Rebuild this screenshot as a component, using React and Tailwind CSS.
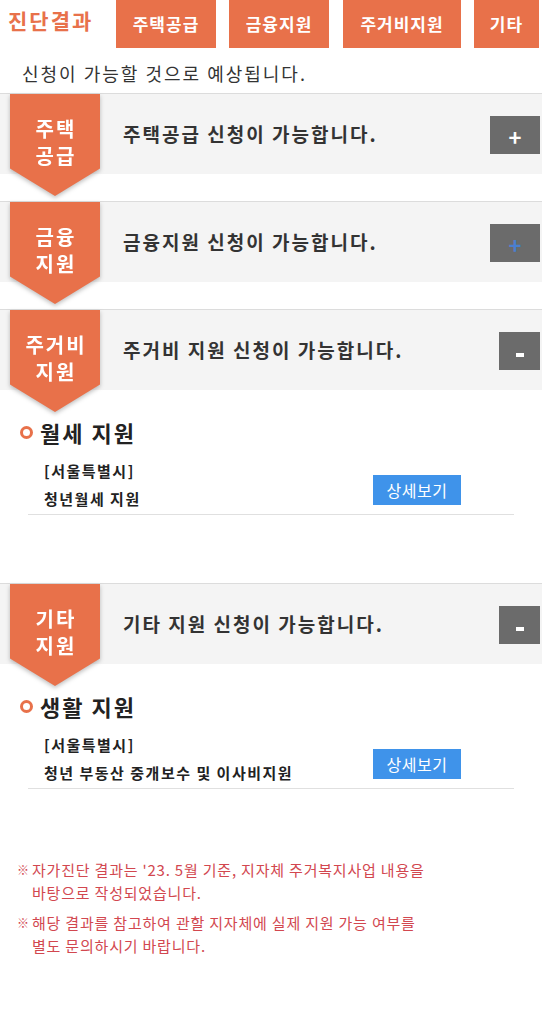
import React from 'react';

const font = { fontFamily: '"Noto Sans CJK KR", "Noto Sans", sans-serif' };

const tabs = [
  { label: '주택공급', w: 'w-[100px]', ml: 'ml-[24px]' },
  { label: '금융지원', w: 'w-[100px]', ml: 'ml-[13px]' },
  { label: '주거비지원', w: 'w-[118px]', ml: 'ml-[14px]' },
  { label: '기타', w: 'w-[65px]', ml: 'ml-[13px]' },
];

function PlusButton({ blue }) {
  return (
    <div className="w-[50px] h-[38px] bg-[#6b6b6b] flex items-end justify-center pb-[7px]">
      <span className={`text-[22px] font-bold leading-none ${blue ? 'text-[#4a7fd0]' : 'text-white'}`}>+</span>
    </div>
  );
}

function MinusButton() {
  return (
    <div className="w-[41px] h-[38px] bg-[#6b6b6b] flex items-end justify-center pb-[13px]">
      <span className="block w-[8px] h-[4px] bg-white" />
    </div>
  );
}

function SectionHeader({ badge, title, open, blue }) {
  return (
    <div className="relative border-t border-[#dcdcdc]">
      <div className="h-[80px] bg-[#f4f4f4] flex items-center justify-between pl-[123px] pr-[2px]">
        <span className="text-[19px] font-bold text-[#333] tracking-[2px]">{title}</span>
        <div className="mt-[2px]">{open ? <MinusButton /> : <PlusButton blue={blue} />}</div>
      </div>
      <div className="absolute left-[10px] top-0 drop-shadow-[0_2px_2px_rgba(0,0,0,0.25)]">
        <div className="w-[90px] h-[102px] bg-[#e8714a] [clip-path:polygon(0_0,100%_0,100%_73%,50%_100%,0_73%)] pt-[21px] pl-[2px] text-center text-white font-bold text-[20px] leading-[27px] tracking-[2px]">
          {badge.map((b) => (
            <div key={b}>{b}</div>
          ))}
        </div>
      </div>
    </div>
  );
}

function Detail({ heading, region, name }) {
  return (
    <div className="pt-[27px]">
      <div className="flex items-center h-[30px] pl-[20px]">
        <span className="w-[13px] h-[13px] rounded-full border-[3px] border-[#e8714a] mr-[7px]" />
        <span className="text-[22px] font-bold text-[#222] leading-[30px] tracking-[2px]">{heading}</span>
      </div>
      <div className="mt-[10px] mx-[28px] border-b border-[#e0e0e0] flex items-end justify-between pl-[16px] pr-[53px]">
        <div className="text-[15px] text-[#222] leading-[28px] pb-[1px] tracking-[1.5px]">
          <div className="font-semibold">{region}</div>
          <div className="font-bold">{name}</div>
        </div>
        <div className="mb-[9px] w-[88px] h-[30px] bg-[#3f93ea] text-white text-[16px] tracking-[0.5px] flex items-center justify-center">
          상세보기
        </div>
      </div>
    </div>
  );
}

export default function App() {
  return (
    <div className="w-[542px] min-h-[1024px] bg-white" style={font}>
      <div className="flex items-stretch h-[48px]">
        <div className="ml-[8px] w-[84px] flex items-center text-[21px] font-bold text-[#e8714a] pb-[6px] tracking-[2px] whitespace-nowrap">
          진단결과
        </div>
        {tabs.map((t) => (
          <div
            key={t.label}
            className={`${t.w} ${t.ml} bg-[#e8714a] text-white font-bold text-[17px] tracking-[1px] flex items-center justify-center`}
          >
            {t.label}
          </div>
        ))}
      </div>

      <div className="pl-[22px] pt-[12px] h-[45px] text-[18px] text-[#333] leading-[26px] tracking-[2px]">
        신청이 가능할 것으로 예상됩니다.
      </div>

      <SectionHeader badge={['주택', '공급']} title="주택공급 신청이 가능합니다." />
      <div className="h-[27px]" />
      <SectionHeader badge={['금융', '지원']} title="금융지원 신청이 가능합니다." blue />
      <div className="h-[27px]" />
      <SectionHeader badge={['주거비', '지원']} title="주거비 지원 신청이 가능합니다." open />
      <Detail heading="월세 지원" region="[서울특별시]" name="청년월세 지원" />
      <div className="h-[68px]" />
      <SectionHeader badge={['기타', '지원']} title="기타 지원 신청이 가능합니다." open />
      <Detail heading="생활 지원" region="[서울특별시]" name="청년 부동산 중개보수 및 이사비지원" />

      <div className="mt-[69px] pl-[17px] text-[15px] leading-[23px] text-[#d2474f] tracking-[0.8px]">
        <div className="flex">
          <span className="w-[15px] text-[12px]">※</span>
          <div>
            자가진단 결과는 '23. 5월 기준, 지자체 주거복지사업 내용을
            <br />
            바탕으로 작성되었습니다.
          </div>
        </div>
        <div className="flex mt-[7px]">
          <span className="w-[15px] text-[12px]">※</span>
          <div>
            해당 결과를 참고하여 관할 지자체에 실제 지원 가능 여부를
            <br />
            별도 문의하시기 바랍니다.
          </div>
        </div>
      </div>
    </div>
  );
}
